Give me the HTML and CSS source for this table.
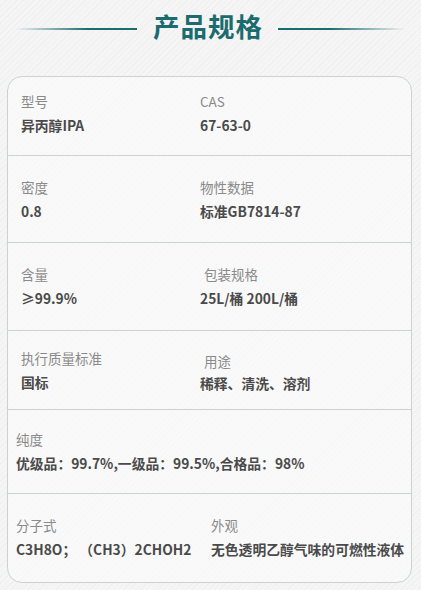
FILE: index.html
```html
<!DOCTYPE html>
<html lang="zh">
<head>
<meta charset="utf-8">
<link rel="stylesheet" href="styles.css">
</head>
<body>
<div class="page">
  <header class="head">
    <span class="line line-left"></span>
    <h1 class="title">产品规格</h1>
    <span class="line line-right"></span>
  </header>
  <section class="card">
    <div class="row r1">
      <div class="cell"><div class="label">型号</div><div class="value">异丙醇IPA</div></div>
      <div class="cell"><div class="label">CAS</div><div class="value">67-63-0</div></div>
    </div>
    <div class="row r2">
      <div class="cell"><div class="label">密度</div><div class="value">0.8</div></div>
      <div class="cell"><div class="label">物性数据</div><div class="value">标准GB7814-87</div></div>
    </div>
    <div class="row r3">
      <div class="cell"><div class="label">含量</div><div class="value">≥99.9%</div></div>
      <div class="cell shift"><div class="label">包装规格</div><div class="value">25L/桶 200L/桶</div></div>
    </div>
    <div class="row r4">
      <div class="cell"><div class="label">执行质量标准</div><div class="value">国标</div></div>
      <div class="cell shift low"><div class="label">用途</div><div class="value">稀释、清洗、溶剂</div></div>
    </div>
    <div class="row r5 wide">
      <div class="cell"><div class="label">纯度</div><div class="value">优级品：99.7%,一级品：99.5%,合格品：98%</div></div>
    </div>
    <div class="row r6 wide">
      <div class="cell"><div class="label">分子式</div><div class="value">C3H8O； （CH3）2CHOH2</div></div>
      <div class="cell c6"><div class="label">外观</div><div class="value">无色透明乙醇气味的可燃性液体</div></div>
    </div>
  </section>
</div>
</body>
</html>
```

FILE: styles.css
```css
html, body {
  margin: 0;
  padding: 0;
}
body {
  width: 421px;
  height: 590px;
  overflow: hidden;
  font-family: "Noto Sans CJK SC", "Noto Sans", sans-serif;
  background-color: #f5f5f5;
  background-image: repeating-linear-gradient(135deg, rgba(0,0,0,0.018) 0 1px, transparent 1px 4px);
}
.page {
  padding-top: 6px;
}
.head {
  display: flex;
  align-items: center;
  height: 40px;
  padding-left: 15px;
}
.line {
  height: 2px;
  margin-top: 6px;
}
.line-left {
  width: 122px;
  background: linear-gradient(90deg, rgba(27,107,111,0), #1b6b6f 60%);
}
.line-right {
  width: 127px;
  background: linear-gradient(90deg, #1b6b6f 40%, rgba(27,107,111,0));
}
.title {
  margin: 0 15px 0 16px;
  width: 110px;
  font-size: 26.5px;
  font-weight: 700;
  letter-spacing: 1px;
  color: #1b6b6f;
  line-height: 40px;
  white-space: nowrap;
}
.card {
  margin: 30px 0 0 7px;
  width: 403px;
  border: 1px solid #c9d3d3;
  border-radius: 15px;
  background: rgba(252,252,252,0.6);
}
.row {
  display: flex;
  box-sizing: border-box;
  padding-left: 13px;
  border-bottom: 1px solid #c9d3d3;
}
.row:last-child {
  border-bottom: none;
}
.cell {
  display: flex;
  flex-direction: column;
  gap: 4px;
}
.cell:first-child {
  width: 179px;
}
.label {
  font-size: 13.5px;
  line-height: 20px;
  color: #8a8a8a;
}
.value {
  font-size: 13.8px;
  line-height: 20px;
  font-weight: 700;
  color: #4a4a4a;
  white-space: nowrap;
}
.r1 { height: 79px; padding-top: 14px; }
.r2 { height: 87px; padding-top: 21px; }
.r3 { height: 88px; padding-top: 21px; }
.r4 { height: 79px; padding-top: 17px; }
.r5 { height: 84px; padding-top: 19px; }
.r6 { height: 88px; padding-top: 21px; }
.shift .label { padding-left: 4px; }
.low .label { margin-top: 3px; }
.low { gap: 2px; }
.wide { padding-left: 8px; }
.wide .cell:first-child { width: 195px; }
```
